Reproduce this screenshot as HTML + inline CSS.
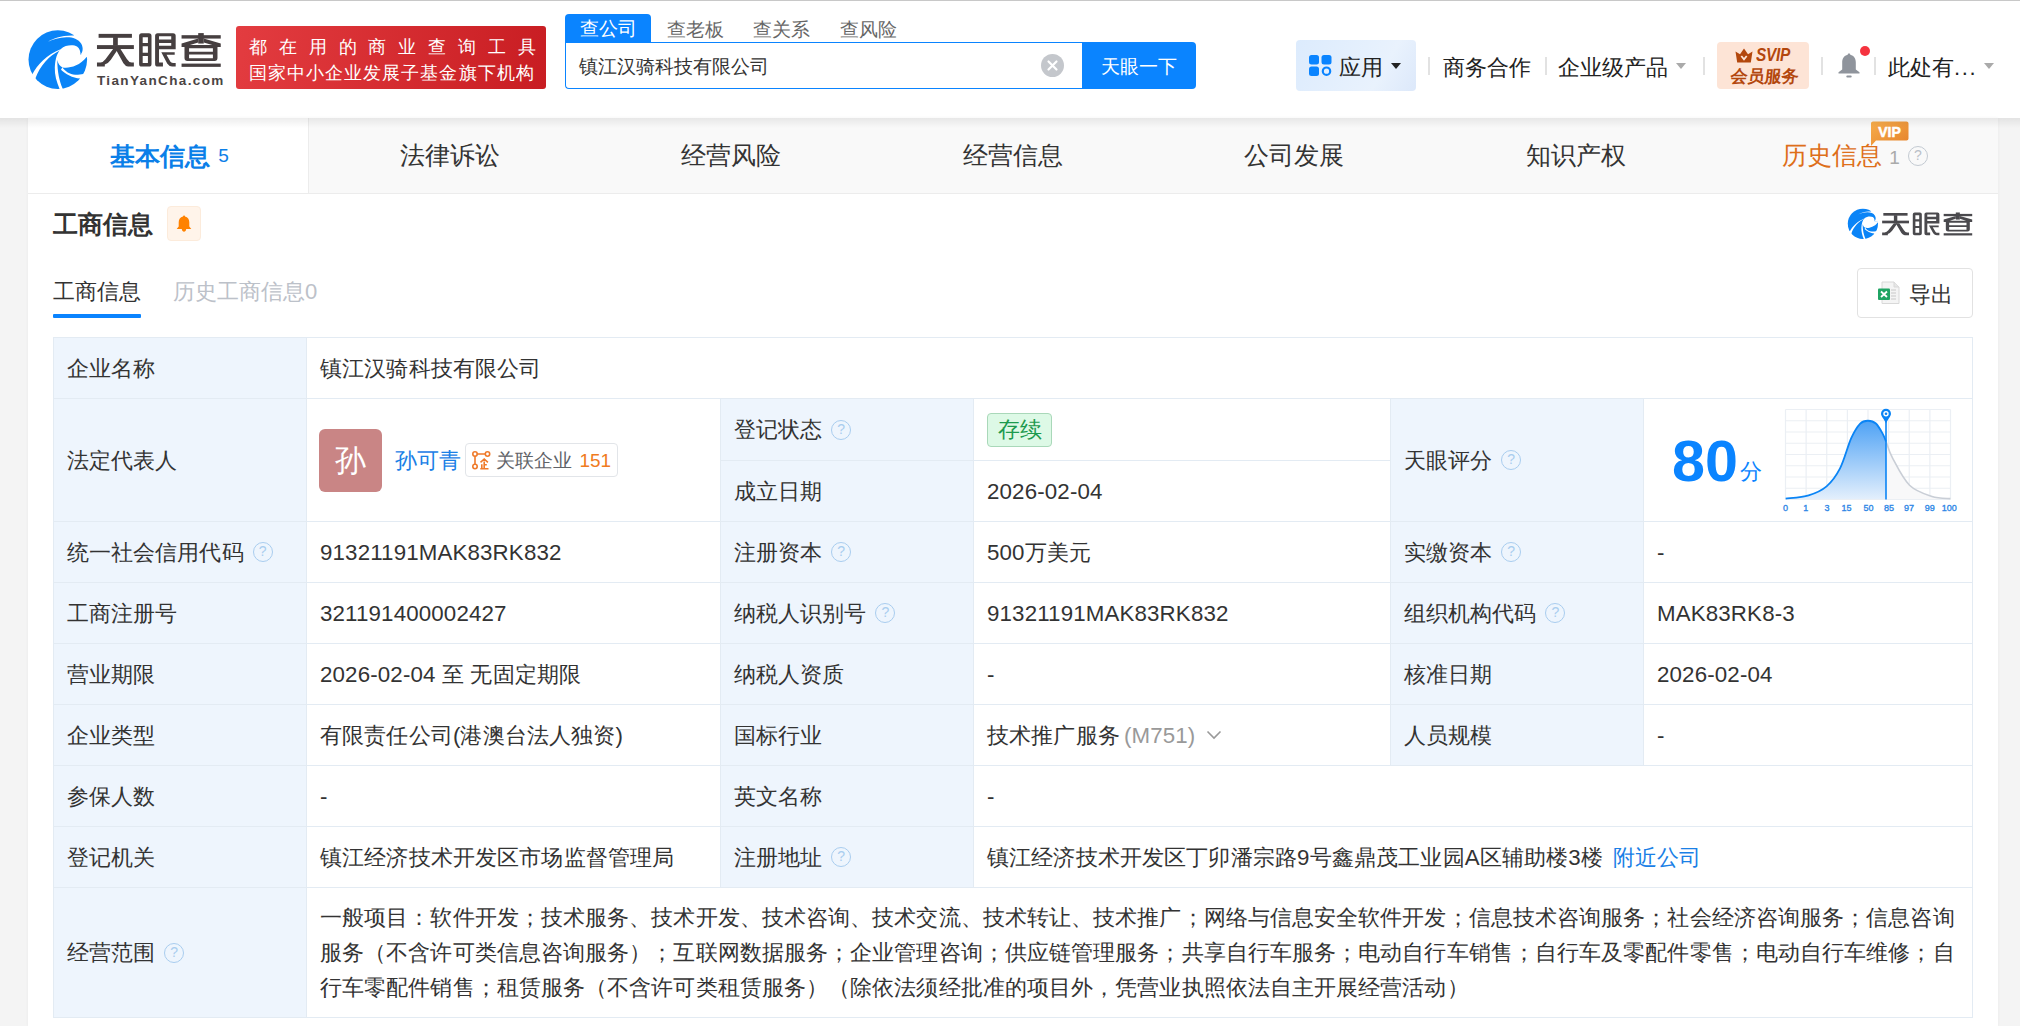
<!DOCTYPE html>
<html><head><meta charset="utf-8">
<style>
*{box-sizing:border-box;margin:0;padding:0}
html,body{width:2020px;height:1026px;overflow:hidden}
body{background:#f4f4f4;font-family:"Liberation Sans",sans-serif;color:#333;position:relative}
.a{position:absolute;white-space:nowrap}
#hdr{position:absolute;left:0;top:0;width:2020px;height:118px;background:#fff}
#topline{position:absolute;left:0;top:0;width:2020px;height:1px;background:#c8c8c8}
.sep{position:absolute;width:1.5px;height:18px;background:#e2e2e2;top:57px}
.caret{position:absolute;width:0;height:0;border-left:5.5px solid transparent;border-right:5.5px solid transparent;border-top:6px solid #999}
#card{position:absolute;left:28px;top:118px;width:1970px;height:908px;background:#fff;box-shadow:0 0 3px rgba(0,0,0,0.05)}
#tabs{position:absolute;left:0;top:0;width:1970px;height:76px;background:#f9f9f9;border-bottom:1px solid #ececec}
.tab{position:absolute;top:0;height:75px;line-height:75px;text-align:center;font-size:25.2px;color:#333;width:281.4px}
#shadow{position:absolute;left:0;top:118px;width:2020px;height:10px;background:linear-gradient(rgba(0,0,0,0.07),rgba(0,0,0,0));pointer-events:none}
.cell{position:absolute;border-right:1px solid #e3ebf3;border-bottom:1px solid #e3ebf3;font-size:22.3px;letter-spacing:0.15px;line-height:25px;white-space:nowrap;display:flex;align-items:center}
.lb{background:#eef5fd;padding-left:12.5px;color:#333}
.vl{background:#fff;padding-left:13px;color:#333}
.q{display:inline-block;width:20px;height:20px;border:1.6px solid #a9cdef;border-radius:50%;color:#a9cdef;font-size:14px;line-height:17px;text-align:center;margin-left:9px;font-weight:normal;position:relative;top:0px}
</style></head><body>
<div id="hdr">
  <div id="topline"></div>
  <!-- logo -->
  <svg class="a" style="left:25px;top:27px" width="66" height="66" viewBox="0 0 66 66">
    <circle cx="32.8" cy="32.6" r="29.3" fill="#0a84f7"/>
    <path d="M23.1 14.8C28 11.8 36 8.3 48.8 8.6L50 0L66 0L66 29L55.5 27.7C57.5 25.5 58.8 21.5 56.3 16.8C53.5 12 47 10.1 41.4 10.3C34 10.5 28 12.5 23.1 14.8Z" fill="#fff"/>
    <path d="M55.5 27.7C55.6 24.5 54.5 21 52 19.5C49 17.8 41 17.2 35.6 22.2C32.5 25.5 30.2 31 29.8 40.6C29.6 48 31.5 55 34.8 62.5L35 66L38.5 66L37.5 61.2C34.5 54 32.3 45 32.3 33C33 36.5 35 39.5 37.5 40.4C43 41.5 54 40 61.6 30.1L66 30L66 28Z" fill="#fff"/>
    <path d="M4 46L7.2 47.5C12 38 22 27.5 35.6 22.2L34.8 23.5C24 29 15 38.5 10.3 51.8L8 54Z" fill="#fff"/>
    <path d="M37.3 40.2C40 44 45 47.8 50.3 47.7C53 47.8 56 47.3 58.3 46.9L62 48L57 54L54.9 51.5C48 51 40 47 36 42.7Z" fill="#fff"/>
  </svg>
  <svg class="a" style="left:94px;top:28px" width="132" height="42" viewBox="0 0 2020 643"><g fill="#463f40">
    <rect x="70" y="90" width="510" height="60"/>
    <rect x="45" y="262" width="565" height="60"/>
    <rect x="292" y="140" width="72" height="130"/>
    <path d="M292 322H368L255 490Q215 545 165 560V590H45V530H100Q140 525 175 480Z"/>
    <path d="M330 322H405L500 470Q535 525 575 530H610V590H520Q480 585 450 540Z"/>
    <path d="M690 120Q690 80 730 80H840Q880 80 880 120V550Q880 590 840 590H730Q690 590 690 550ZM745 140V230H825V140ZM745 280V380H825V280ZM745 430V535H825V430Z" fill-rule="evenodd"/>
    <path d="M935 120Q935 80 975 80H1210Q1250 80 1250 120V325H995V530H1055V590H975Q935 590 935 550ZM995 125V175H1182V125ZM995 230V272H1182V230Z" fill-rule="evenodd"/>
    <path d="M1030 372H1235V410H1110L1170 515Q1190 535 1215 535H1250V590H1195Q1150 590 1120 545Z"/>
    <rect x="1340" y="110" width="600" height="52"/>
    <rect x="1595" y="78" width="85" height="160"/>
    <path d="M1595 160L1340 238V292H1940V238L1680 160V222L1810 262H1470L1595 222Z"/>
    <path d="M1385 292H1890V460Q1890 505 1845 505H1430Q1385 505 1385 460ZM1455 310V365H1820V310ZM1455 405V465H1820V405Z" fill-rule="evenodd"/>
    <rect x="1340" y="545" width="600" height="50"/>
  </g></svg>
  <div class="a" style="left:97px;top:71.5px;font-size:13.5px;line-height:18px;font-weight:bold;color:#4a4444;letter-spacing:1.37px">TianYanCha.com</div>
  <!-- red banner -->
  <div class="a" style="left:236px;top:26px;width:310px;height:63px;border-radius:3px;background:linear-gradient(100deg,#e33c40,#c81d22)"></div>
  <div class="a" style="left:249px;top:33.5px;font-size:18px;line-height:26px;color:#fff;letter-spacing:11.85px">都在用的商业查询工具</div>
  <div class="a" style="left:249px;top:60px;font-size:18px;line-height:26px;color:#fff;letter-spacing:1.05px">国家中小企业发展子基金旗下机构</div>
  <!-- search tabs -->
  <div class="a" style="left:565px;top:14px;width:86px;height:29px;background:#0a84ff;border-radius:4px 4px 0 0"></div>
  <div class="a" style="left:580px;top:16px;font-size:18.9px;line-height:26px;color:#fff">查公司</div>
  <div class="a" style="left:667px;top:16.5px;font-size:18.9px;line-height:26px;color:#666">查老板</div>
  <div class="a" style="left:753px;top:16.5px;font-size:18.9px;line-height:26px;color:#666">查关系</div>
  <div class="a" style="left:840px;top:16.5px;font-size:18.9px;line-height:26px;color:#666">查风险</div>
  <div class="a" style="left:565px;top:42px;width:520px;height:47px;border:1.5px solid #0a84ff;border-right:none;border-radius:0 0 0 4px;background:#fff"></div>
  <div class="a" style="left:579px;top:54px;font-size:18.9px;line-height:26px;color:#333">镇江汉骑科技有限公司</div>
  <div class="a" style="left:1041px;top:54px;width:23px;height:23px;border-radius:50%;background:#c4c7cc"></div>
  <svg class="a" style="left:1041px;top:54px" width="23" height="23" viewBox="0 0 23 23"><path d="M7.5 7.5L15.5 15.5M15.5 7.5L7.5 15.5" stroke="#fff" stroke-width="2.2" stroke-linecap="round"/></svg>
  <div class="a" style="left:1082px;top:42px;width:114px;height:47px;background:#0a84ff;border-radius:0 4px 4px 0"></div>
  <div class="a" style="left:1101px;top:54px;font-size:19px;line-height:26px;color:#fff">天眼一下</div>
  <!-- right nav -->
  <div class="a" style="left:1296px;top:40px;width:120px;height:51px;border-radius:4px;background:linear-gradient(120deg,#dcebfd,#e9f2fd 70%,#dce8fa)"></div>
  <svg class="a" style="left:1309px;top:55px" width="23" height="21" viewBox="0 0 23 21">
    <rect x="0" y="0" width="10" height="9.5" rx="2.5" fill="#0a84ff"/>
    <rect x="12.5" y="0" width="10" height="9.5" rx="2.5" fill="#0a84ff"/>
    <rect x="0" y="11.5" width="10" height="9.5" rx="2.5" fill="#0a84ff"/>
    <circle cx="17.5" cy="16.2" r="3.7" fill="none" stroke="#0a84ff" stroke-width="2.2"/>
  </svg>
  <div class="a" style="left:1339px;top:54.5px;font-size:22.05px;line-height:26px;color:#222">应用</div>
  <div class="caret" style="left:1391px;top:63px;border-top-color:#222"></div>
  <div class="sep" style="left:1428px"></div>
  <div class="a" style="left:1443px;top:54.5px;font-size:22.05px;line-height:26px;color:#222">商务合作</div>
  <div class="sep" style="left:1545px"></div>
  <div class="a" style="left:1558px;top:54.5px;font-size:22.05px;line-height:26px;color:#222">企业级产品</div>
  <div class="caret" style="left:1676px;top:63px;border-top-color:#aaa"></div>
  <div class="sep" style="left:1703px"></div>
  <div class="a" style="left:1717px;top:42px;width:92px;height:47px;border-radius:4px;background:#fde4d6"></div>
  <div class="a" style="left:1756px;top:44.5px;font-size:17.5px;line-height:20px;color:#b3470d;font-weight:bold;font-style:italic;transform:scaleX(0.88);transform-origin:0 0;letter-spacing:-0.3px">SVIP</div>
  <svg class="a" style="left:1735px;top:48px" width="18" height="15" viewBox="0 0 18 15"><path d="M0.5 3.5L5 6.2L9 0.5L13 6.2L17.5 3.5L15.8 14.5H2.2Z" fill="#b3470d"/><path d="M6.3 8L9 11.3L11.7 8" stroke="#fde4d6" stroke-width="1.8" fill="none"/></svg>
  <div class="a" style="left:1729px;top:66px;font-size:17px;line-height:22px;color:#b3470d;font-weight:bold;transform:skewX(-6deg);transform-origin:0 100%">会员服务</div>
  <div class="sep" style="left:1821px"></div>
  <svg class="a" style="left:1837px;top:52px" width="24" height="27" viewBox="0 0 24 27"><path d="M12 1.5C12.8 1.5 13.3 2 13.3 2.7C17 3.5 18.8 6.5 18.8 10.5V17.5L22.5 20.2V21.5H1.5V20.2L5.2 17.5V10.5C5.2 6.5 7 3.5 10.7 2.7C10.7 2 11.2 1.5 12 1.5Z" fill="#8f949c"/><rect x="9.3" y="23.5" width="5.4" height="2" rx="1" fill="#8f949c"/></svg>
  <div class="a" style="left:1860px;top:46px;width:10px;height:10px;border-radius:50%;background:#f5333f"></div>
  <div class="sep" style="left:1874px"></div>
  <div class="a" style="left:1888px;top:54.5px;font-size:22.05px;line-height:26px;color:#222">此处有<span style="letter-spacing:1.6px">...</span></div>
  <div class="caret" style="left:1984px;top:63px;border-top-color:#aaa"></div>
</div>
<div id="card">
  <div id="tabs">
    <div class="tab" style="left:0;background:#fff;color:#0b7fe8;font-weight:bold;border-right:1px solid #ececec;width:281px;padding-left:3px">基本信息<span style="font-size:19px;font-weight:normal;margin-left:8px;vertical-align:2.5px">5</span></div>
    <div class="tab" style="left:281.4px">法律诉讼</div>
    <div class="tab" style="left:562.8px">经营风险</div>
    <div class="tab" style="left:844.2px">经营信息</div>
    <div class="tab" style="left:1125.6px">公司发展</div>
    <div class="tab" style="left:1407px">知识产权</div>
    <div class="tab" style="left:1686.4px;color:#de6f1a">历史信息<span style="font-size:19px;color:#aaa;margin-left:7px">1</span><span class="q" style="border:1.4px solid #c3cad2;color:#b9c0c8;width:20px;height:20px;line-height:17px;font-size:14px;margin-left:8px;vertical-align:4px">?</span></div>
  </div>
</div>
<!-- section header -->
<div class="a" style="left:53px;top:210px;font-size:25.2px;line-height:28px;font-weight:bold;color:#333">工商信息</div>
<div class="a" style="left:167px;top:206px;width:34px;height:35px;border-radius:4px;background:#fff4ea;border:1px solid #fcebdb"></div>
<svg class="a" style="left:175px;top:214px" width="18" height="19" viewBox="0 0 18 19"><path d="M9 1.5C9.6 1.5 10 1.9 10 2.4C12.8 3 14.3 5.3 14.3 8.3V12.6L16.3 15H1.7L3.7 12.6V8.3C3.7 5.3 5.2 3 8 2.4C8 1.9 8.4 1.5 9 1.5Z" fill="#ff8200"/><path d="M6.8 15H11.2C11 16.8 10.1 17.8 9 17.8C7.9 17.8 7 16.8 6.8 15Z" fill="#ff8200"/></svg>
<svg class="a" style="left:1845.5px;top:207.3px" width="34" height="34" viewBox="0 0 66 66">
  <circle cx="32.8" cy="32.6" r="29.3" fill="#0a84f7"/>
    <path d="M23.1 14.8C28 11.8 36 8.3 48.8 8.6L50 0L66 0L66 29L55.5 27.7C57.5 25.5 58.8 21.5 56.3 16.8C53.5 12 47 10.1 41.4 10.3C34 10.5 28 12.5 23.1 14.8Z" fill="#fff"/>
    <path d="M55.5 27.7C55.6 24.5 54.5 21 52 19.5C49 17.8 41 17.2 35.6 22.2C32.5 25.5 30.2 31 29.8 40.6C29.6 48 31.5 55 34.8 62.5L35 66L38.5 66L37.5 61.2C34.5 54 32.3 45 32.3 33C33 36.5 35 39.5 37.5 40.4C43 41.5 54 40 61.6 30.1L66 30L66 28Z" fill="#fff"/>
    <path d="M4 46L7.2 47.5C12 38 22 27.5 35.6 22.2L34.8 23.5C24 29 15 38.5 10.3 51.8L8 54Z" fill="#fff"/>
    <path d="M37.3 40.2C40 44 45 47.8 50.3 47.7C53 47.8 56 47.3 58.3 46.9L62 48L57 54L54.9 51.5C48 51 40 47 36 42.7Z" fill="#fff"/>
</svg>
<svg class="a" style="left:1879.9px;top:209.3px" width="96" height="28.6" viewBox="0 0 2020 643" preserveAspectRatio="none"><g fill="#4a494d">
    <rect x="70" y="90" width="510" height="60"/>
    <rect x="45" y="262" width="565" height="60"/>
    <rect x="292" y="140" width="72" height="130"/>
    <path d="M292 322H368L255 490Q215 545 165 560V590H45V530H100Q140 525 175 480Z"/>
    <path d="M330 322H405L500 470Q535 525 575 530H610V590H520Q480 585 450 540Z"/>
    <path d="M690 120Q690 80 730 80H840Q880 80 880 120V550Q880 590 840 590H730Q690 590 690 550ZM745 140V230H825V140ZM745 280V380H825V280ZM745 430V535H825V430Z" fill-rule="evenodd"/>
    <path d="M935 120Q935 80 975 80H1210Q1250 80 1250 120V325H995V530H1055V590H975Q935 590 935 550ZM995 125V175H1182V125ZM995 230V272H1182V230Z" fill-rule="evenodd"/>
    <path d="M1030 372H1235V410H1110L1170 515Q1190 535 1215 535H1250V590H1195Q1150 590 1120 545Z"/>
    <rect x="1340" y="110" width="600" height="52"/>
    <rect x="1595" y="78" width="85" height="160"/>
    <path d="M1595 160L1340 238V292H1940V238L1680 160V222L1810 262H1470L1595 222Z"/>
    <path d="M1385 292H1890V460Q1890 505 1845 505H1430Q1385 505 1385 460ZM1455 310V365H1820V310ZM1455 405V465H1820V405Z" fill-rule="evenodd"/>
    <rect x="1340" y="545" width="600" height="50"/>
  </g></svg>
<!-- sub tabs -->
<div class="a" style="left:53px;top:279px;font-size:22.05px;line-height:26px;color:#333">工商信息</div>
<div class="a" style="left:53px;top:314px;width:88px;height:4px;background:#0a84ff;border-radius:1px"></div>
<div class="a" style="left:173px;top:279px;font-size:22.05px;line-height:26px;color:#bcc1c9">历史工商信息0</div>
<div class="a" style="left:1857px;top:268px;width:116px;height:50px;border:1px solid #e2e2e2;border-radius:4px;background:#fff"></div>
<svg class="a" style="left:1876px;top:281px" width="25" height="24" viewBox="0 0 25 24">
  <path d="M6 1H18L23 6V22.5H6Z" fill="#f4f4f4" stroke="#d8d8d8" stroke-width="1"/>
  <path d="M18 1V6H23" fill="#e6e6e6" stroke="#d8d8d8" stroke-width="1"/>
  <path d="M15 9H20M15 12H20M15 15H20M15 18H20" stroke="#c8c8c8" stroke-width="1"/>
  <rect x="2" y="7.5" width="12" height="11.5" rx="1" fill="#1fa463"/>
  <path d="M5 10.5L11 16M11 10.5L5 16" stroke="#fff" stroke-width="1.8"/>
</svg>
<div class="a" style="left:1909px;top:281.5px;font-size:22.05px;line-height:26px;color:#333">导出</div>
<!-- table -->
<div class="a" style="left:53px;top:337px;width:1920px;height:1px;background:#e3ebf3"></div>
<div class="a" style="left:53px;top:337px;width:1px;height:681px;background:#e3ebf3"></div>
<div class="cell lb" style="left:54px;top:338px;width:253px;height:61px">企业名称</div>
<div class="cell vl" style="left:307px;top:338px;width:1666px;height:61px">镇江汉骑科技有限公司</div>
<div class="cell lb" style="left:54px;top:399px;width:253px;height:123px">法定代表人</div>
<div class="cell vl" style="left:307px;top:399px;width:414px;height:123px"><span style="display:inline-block;width:63px;height:63px;border-radius:6px;background:#c98585;margin-left:-1px;color:#fff;font-size:31px;line-height:63px;text-align:center">孙</span><span style="color:#1a80e6;margin-left:13px">孙可青</span><span style="display:inline-flex;align-items:center;margin-left:4px;height:34px;border:1px solid #e2e5e9;border-radius:4px;padding:0 6px 0 6px;font-size:18.9px;color:#5f6368;letter-spacing:0"><svg width="19" height="19" viewBox="0 0 19 19" style="margin-right:5px"><g stroke="#ef7a2a" stroke-width="1.6" fill="none"><circle cx="3" cy="3" r="2.2"/><circle cx="15.5" cy="3" r="2.2"/><circle cx="3" cy="15.5" r="2.2"/><path d="M5.2 3H13.3M3 5.2V13.3"/><path d="M8.5 11.3L12.2 8L15.9 11.3M12.2 10.5V17.3M12.2 13.8H14.8M9.8 13.2V17.3M8.3 17.7H16.5"/></g></svg>关联企业<span style="color:#f07b20;margin-left:7px">151</span></span></div>
<div class="cell lb" style="left:721px;top:399px;width:253px;height:62px">登记状态<span class="q">?</span></div>
<div class="cell vl" style="left:974px;top:399px;width:417px;height:62px"><span style="display:inline-block;height:34px;line-height:32px;padding:0 9px 0 10px;border:1px solid #a9d8b9;background:#ddf9e6;border-radius:4px;color:#1d9a4e">存续</span></div>
<div class="cell lb" style="left:721px;top:461px;width:253px;height:61px">成立日期</div>
<div class="cell vl" style="left:974px;top:461px;width:417px;height:61px">2026-02-04</div>
<div class="cell lb" style="left:1391px;top:399px;width:253px;height:123px">天眼评分<span class="q">?</span></div>
<div class="cell vl" style="left:1644px;top:399px;width:329px;height:123px;position:absolute"></div>
<div class="cell lb" style="left:54px;top:522px;width:253px;height:61px">统一社会信用代码<span class="q">?</span></div>
<div class="cell vl" style="left:307px;top:522px;width:414px;height:61px">91321191MAK83RK832</div>
<div class="cell lb" style="left:721px;top:522px;width:253px;height:61px">注册资本<span class="q">?</span></div>
<div class="cell vl" style="left:974px;top:522px;width:417px;height:61px">500万美元</div>
<div class="cell lb" style="left:1391px;top:522px;width:253px;height:61px">实缴资本<span class="q">?</span></div>
<div class="cell vl" style="left:1644px;top:522px;width:329px;height:61px">-</div>
<div class="cell lb" style="left:54px;top:583px;width:253px;height:61px">工商注册号</div>
<div class="cell vl" style="left:307px;top:583px;width:414px;height:61px">321191400002427</div>
<div class="cell lb" style="left:721px;top:583px;width:253px;height:61px">纳税人识别号<span class="q">?</span></div>
<div class="cell vl" style="left:974px;top:583px;width:417px;height:61px">91321191MAK83RK832</div>
<div class="cell lb" style="left:1391px;top:583px;width:253px;height:61px">组织机构代码<span class="q">?</span></div>
<div class="cell vl" style="left:1644px;top:583px;width:329px;height:61px">MAK83RK8-3</div>
<div class="cell lb" style="left:54px;top:644px;width:253px;height:61px">营业期限</div>
<div class="cell vl" style="left:307px;top:644px;width:414px;height:61px">2026-02-04 至 无固定期限</div>
<div class="cell lb" style="left:721px;top:644px;width:253px;height:61px">纳税人资质</div>
<div class="cell vl" style="left:974px;top:644px;width:417px;height:61px">-</div>
<div class="cell lb" style="left:1391px;top:644px;width:253px;height:61px">核准日期</div>
<div class="cell vl" style="left:1644px;top:644px;width:329px;height:61px">2026-02-04</div>
<div class="cell lb" style="left:54px;top:705px;width:253px;height:61px">企业类型</div>
<div class="cell vl" style="left:307px;top:705px;width:414px;height:61px">有限责任公司(港澳台法人独资)</div>
<div class="cell lb" style="left:721px;top:705px;width:253px;height:61px">国标行业</div>
<div class="cell vl" style="left:974px;top:705px;width:417px;height:61px">技术推广服务<span style="color:#999;margin-left:4px">(M751)</span><svg width="16" height="10" viewBox="0 0 16 10" style="margin-left:11px"><path d="M1.5 1.5L8 8L14.5 1.5" stroke="#999" stroke-width="1.6" fill="none"/></svg></div>
<div class="cell lb" style="left:1391px;top:705px;width:253px;height:61px">人员规模</div>
<div class="cell vl" style="left:1644px;top:705px;width:329px;height:61px">-</div>
<div class="cell lb" style="left:54px;top:766px;width:253px;height:61px">参保人数</div>
<div class="cell vl" style="left:307px;top:766px;width:414px;height:61px">-</div>
<div class="cell lb" style="left:721px;top:766px;width:253px;height:61px">英文名称</div>
<div class="cell vl" style="left:974px;top:766px;width:999px;height:61px">-</div>
<div class="cell lb" style="left:54px;top:827px;width:253px;height:61px">登记机关</div>
<div class="cell vl" style="left:307px;top:827px;width:414px;height:61px">镇江经济技术开发区市场监督管理局</div>
<div class="cell lb" style="left:721px;top:827px;width:253px;height:61px">注册地址<span class="q">?</span></div>
<div class="cell vl" style="left:974px;top:827px;width:999px;height:61px">镇江经济技术开发区丁卯潘宗路9号鑫鼎茂工业园A区辅助楼3楼<span style="color:#1a80e6;margin-left:10px">附近公司</span></div>
<div class="cell lb" style="left:54px;top:888px;width:253px;height:130px">经营范围<span class="q">?</span></div>
<div class="cell vl" style="left:307px;top:888px;width:1666px;height:130px"><div style="line-height:35px;letter-spacing:0.09px;padding-top:0px">一般项目：软件开发；技术服务、技术开发、技术咨询、技术交流、技术转让、技术推广；网络与信息安全软件开发；信息技术咨询服务；社会经济咨询服务；信息咨询<br>服务（不含许可类信息咨询服务）；互联网数据服务；企业管理咨询；供应链管理服务；共享自行车服务；电动自行车销售；自行车及零配件零售；电动自行车维修；自<br>行车零配件销售；租赁服务（不含许可类租赁服务）（除依法须经批准的项目外，凭营业执照依法自主开展经营活动）</div></div>
<svg class="a" style="left:1775px;top:400px" width="200" height="120" viewBox="0 0 200 120">
  <defs><linearGradient id="gf" x1="0" y1="0" x2="0" y2="1"><stop offset="0" stop-color="#4ea2f5"/><stop offset="1" stop-color="#e3effc"/></linearGradient></defs>
  <path d="M10.50 9.50V99.50M31.12 9.50V99.50M51.75 9.50V99.50M72.38 9.50V99.50M93.00 9.50V99.50M113.62 9.50V99.50M134.25 9.50V99.50M154.88 9.50V99.50M175.50 9.50V99.50M10.50 9.50H175.50M10.50 20.75H175.50M10.50 32.00H175.50M10.50 43.25H175.50M10.50 54.50H175.50M10.50 65.75H175.50M10.50 77.00H175.50M10.50 88.25H175.50M10.50 99.50H175.50" stroke="#ebeff4" stroke-width="1.2" fill="none"/>
  <path d="M110.99 41.48C112.11 44.28 113.79 51.01 117.71 58.30C121.64 65.58 127.99 78.85 134.53 85.20C141.07 91.55 150.13 94.17 156.95 96.41C163.77 98.65 172.37 98.28 175.45 98.65L175.45 99.00L110.99 99.00Z" fill="#f8f8f9"/>
  <path d="M10.65 98.65C14.48 98.09 26.81 97.35 33.63 95.29C40.45 93.24 46.34 90.81 51.57 86.32C56.80 81.84 60.91 76.42 65.02 68.39C69.13 60.35 72.87 45.59 76.23 38.12C79.60 30.64 82.40 26.44 85.20 23.54C88.00 20.65 90.43 20.74 93.05 20.74C95.67 20.74 98.47 21.39 100.90 23.54C103.33 25.69 105.94 30.64 107.62 33.63C109.30 36.62 110.43 40.17 110.99 41.48L110.99 99.00L10.65 99.00Z" fill="url(#gf)"/>
  <path d="M110.99 41.48C112.11 44.28 113.79 51.01 117.71 58.30C121.64 65.58 127.99 78.85 134.53 85.20C141.07 91.55 150.13 94.17 156.95 96.41C163.77 98.65 172.37 98.28 175.45 98.65" stroke="#c9ced6" stroke-width="1.6" fill="none"/>
  <path d="M10.65 98.65C14.48 98.09 26.81 97.35 33.63 95.29C40.45 93.24 46.34 90.81 51.57 86.32C56.80 81.84 60.91 76.42 65.02 68.39C69.13 60.35 72.87 45.59 76.23 38.12C79.60 30.64 82.40 26.44 85.20 23.54C88.00 20.65 90.43 20.74 93.05 20.74C95.67 20.74 98.47 21.39 100.90 23.54C103.33 25.69 105.94 30.64 107.62 33.63C109.30 36.62 110.43 40.17 110.99 41.48" stroke="#0a84f5" stroke-width="1.8" fill="none"/>
  <path d="M111 19V99.5" stroke="#0a84f5" stroke-width="1.6"/>
  <path d="M106 13.8A5 5 0 1 1 116 13.8C116 16.5 112.6 19.5 111 23.5C109.4 19.5 106 16.5 106 13.8Z" fill="#0a84f5"/>
  <circle cx="111" cy="13.8" r="2.7" fill="#fff"/><circle cx="111" cy="13.8" r="1.3" fill="#0a84f5"/>
  <g font-family="Liberation Sans" font-size="9" fill="#2f87e6" stroke="#2f87e6" stroke-width="0.35"><text x="10.6" y="111" text-anchor="middle">0</text><text x="30.8" y="111" text-anchor="middle">1</text><text x="52.0" y="111" text-anchor="middle">3</text><text x="71.6" y="111" text-anchor="middle">15</text><text x="93.4" y="111" text-anchor="middle">50</text><text x="114.0" y="111" text-anchor="middle">85</text><text x="134.0" y="111" text-anchor="middle">97</text><text x="154.7" y="111" text-anchor="middle">99</text><text x="174.3" y="111" text-anchor="middle">100</text></g>
</svg>
<div class="a" style="left:1672px;top:430px;font-size:57px;line-height:62px;font-weight:bold;color:#0a84ff;transform:scaleX(1.04);transform-origin:0 0">80</div>
<div class="a" style="left:1740px;top:459px;font-size:22px;line-height:26px;color:#0a84ff">分</div>
<!-- VIP tag -->
<svg class="a" style="left:1868px;top:120px" width="42" height="28" viewBox="0 0 42 28">
  <defs><linearGradient id="vg" x1="0" y1="0" x2="1" y2="1"><stop offset="0" stop-color="#f7ad4c"/><stop offset="1" stop-color="#e5822a"/></linearGradient></defs>
  <path d="M5 1.5H38.5C39.6 1.5 40.5 2.4 40.5 3.5V18.5C40.5 19.6 39.6 20.5 38.5 20.5H8L3 26V3.5C3 2.4 3.9 1.5 5 1.5Z" fill="url(#vg)"/>
  <text x="21.5" y="16.5" text-anchor="middle" font-family="Liberation Sans" font-size="14" font-weight="bold" fill="#fff" stroke="#fff" stroke-width="0.5">VIP</text>
</svg>
<div id="shadow"></div>
</body></html>
